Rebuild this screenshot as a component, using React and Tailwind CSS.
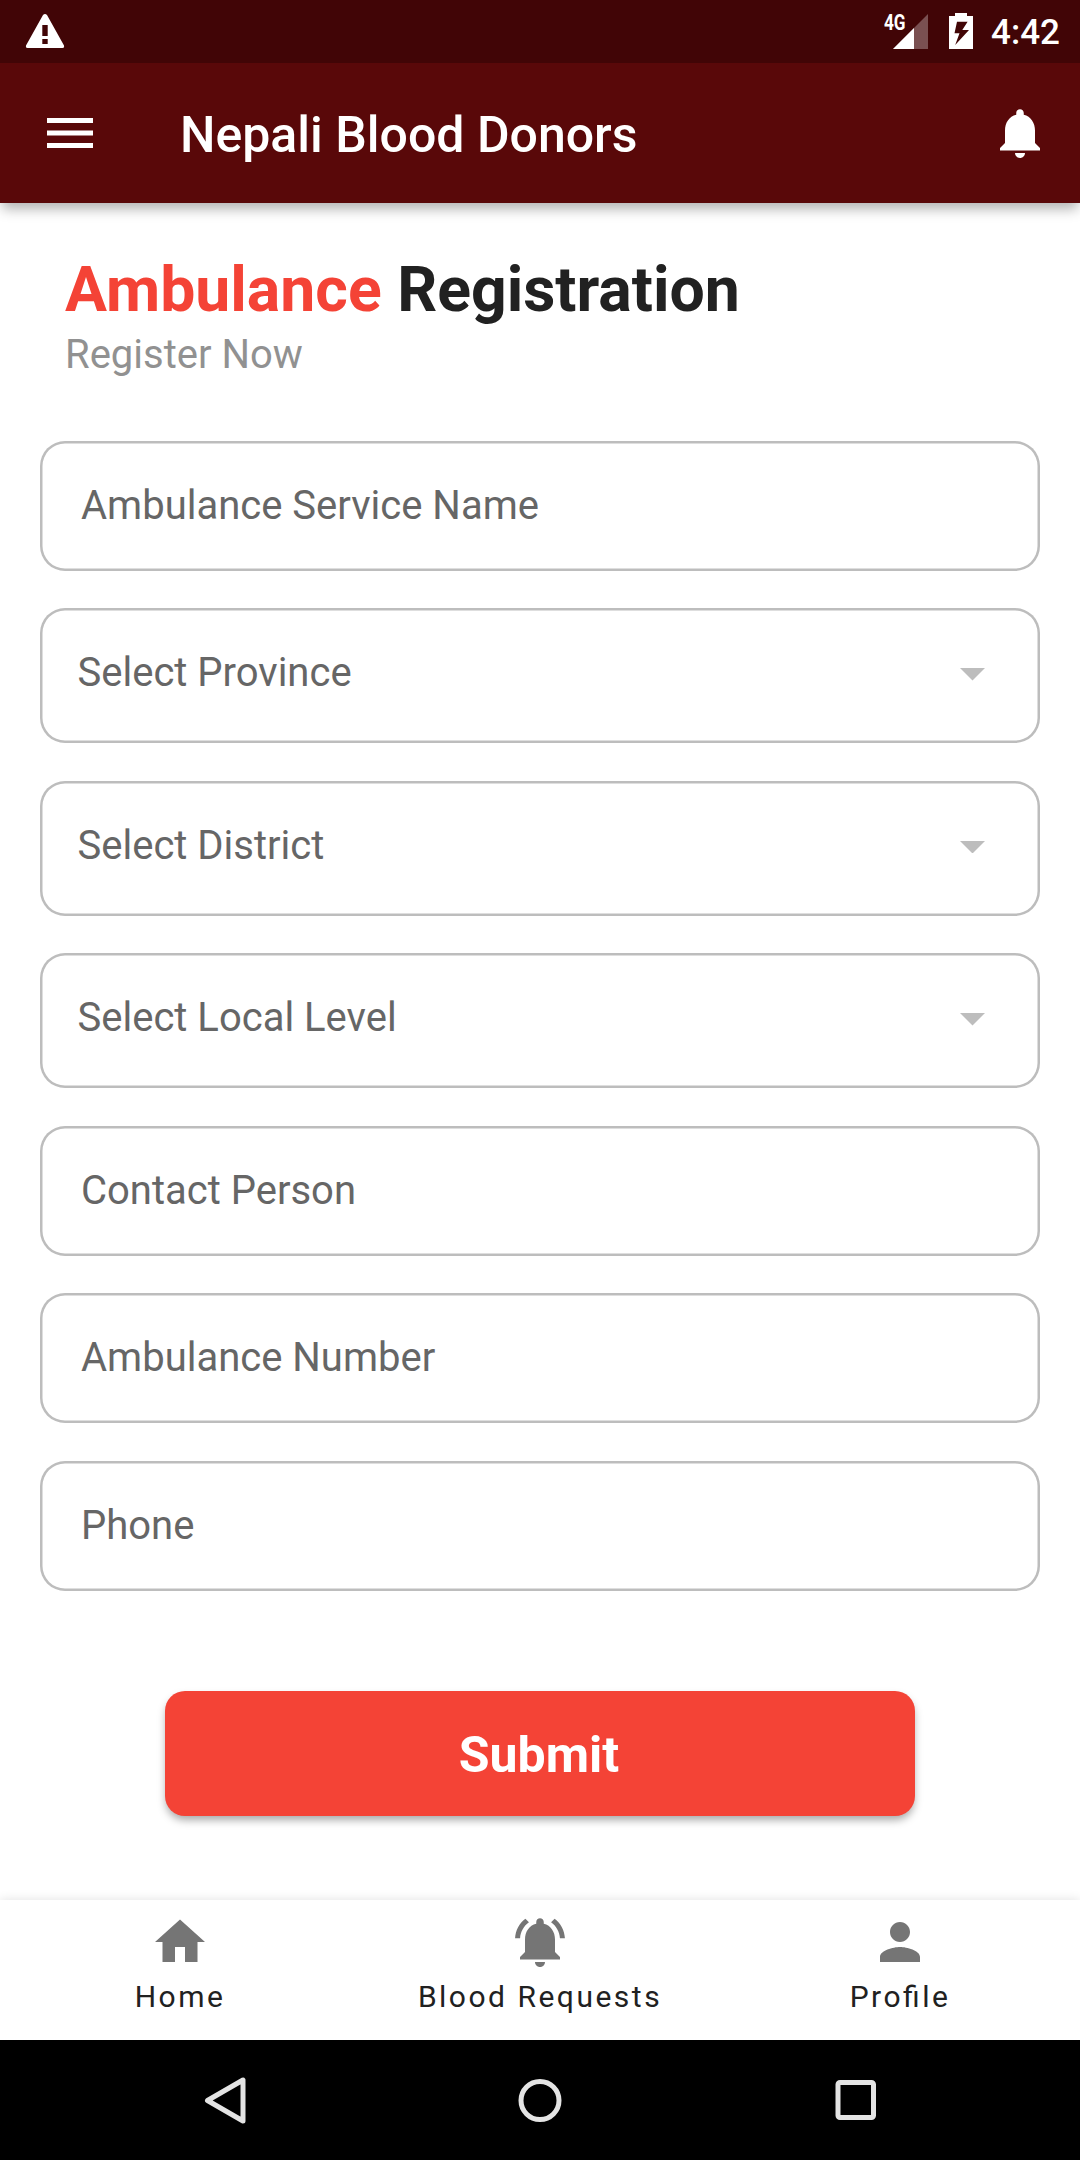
function StatusBar() {
  return (
    <div className="flex h-[63px] items-center bg-[#410506] text-white">
      <svg className="ml-[25px] h-[63px] w-10" viewBox="0 0 40 63" fill="currentColor">
        <path
          fillRule="evenodd"
          d="M18 15Q20 13 22 15L39 45.500Q39.500 48 37.500 48H2.500Q.500 48 1 45.500ZM17.300 25V36H22.700V25ZM17.300 39V44H22.700V39Z"
        />
      </svg>
      <div className="ml-auto flex h-full">
        <span className="mt-[9.500px] w-[22px] origin-left scale-x-[0.800] text-[21.500px] leading-[25px] font-bold">4G</span>
        <svg className="-ml-[14px] h-[63px] w-[37px]" viewBox="0 0 37 63">
          <path d="M1 49L36 14V49Z" fill="#fff" fillOpacity=".3" />
          <path d="M1 49L22 28V49Z" fill="#fff" />
        </svg>
        <svg className="ml-5 h-[63px] w-[24px]" viewBox="0 0 24 63" fill="currentColor">
          <path
            fillRule="evenodd"
            d="M6 13H18V16H24V49H0V16H6ZM8 21.700L5.500 33.300H10.500L6.200 45L20 30H13.300L18.600 21.700Z"
          />
        </svg>
        <span className="mr-5 ml-[18px] text-[35px] leading-[66px] font-medium">4:42</span>
      </div>
    </div>
  );
}

function AppBar() {
  return (
    <header className="flex h-[140px] items-center bg-[#590809] text-white">
      <svg className="ml-10 size-[60px]" viewBox="0 0 60 60" fill="currentColor">
        <path d="M7 15H53V20H7ZM7 27.500H53V32.500H7ZM7 40H53V45H7Z" />
      </svg>
      <h1 className="mt-1 ml-20 text-[50px] leading-[60px] font-medium">Nepali Blood Donors</h1>
      <svg className="mr-[30px] ml-auto size-[60px]" viewBox="0 0 24 24" fill="currentColor">
        <path d="M12 22c1.100 0 2-.900 2-2h-4c0 1.100.890 2 2 2zm6-6v-5c0-3.070-1.640-5.640-4.500-6.320V4c0-.830-.670-1.500-1.500-1.500s-1.500.670-1.500 1.500v.680C7.630 5.360 6 7.920 6 11v5l-2 2v1h16v-1l-2-2z" />
      </svg>
    </header>
  );
}

function TextField({ label }) {
  return (
    <div className="flex h-[130px] items-center rounded-[25px] pl-[41px] text-[40px] text-[#666] shadow-[inset_0_0_0_2.5px_#bdbdbd]">
      {label}
    </div>
  );
}

function SelectField({ label }) {
  return (
    <div className="flex h-[135px] items-center rounded-[25px] pr-[55px] pb-[5px] pl-[37.5px] text-[40px] text-[#666] shadow-[inset_0_0_0_2.5px_#bdbdbd]">
      <span className="grow">{label}</span>
      <svg className="mt-[2.5px] h-[12.500px] w-[25px]" viewBox="0 0 10 5" fill="#bdbdbd">
        <path d="M0 0L5 5L10 0Z" />
      </svg>
    </div>
  );
}

const tabs = [
  { label: "Home", path: "M10 20v-6h4v6h5v-8h3L12 3 2 12h3v8z" },
  {
    label: "Blood Requests",
    path: "M7.580 4.080L6.150 2.650C3.750 4.480 2.170 7.300 2.030 10.500h2c.150-2.650 1.510-4.970 3.550-6.420zm12.390 6.420h2c-.150-3.200-1.730-6.020-4.120-7.850l-1.420 1.430c2.020 1.450 3.390 3.770 3.540 6.420zM18 11c0-3.070-1.640-5.640-4.500-6.320V4c0-.830-.670-1.500-1.500-1.500s-1.500.670-1.500 1.500v.680C7.630 5.360 6 7.920 6 11v5l-2 2v1h16v-1l-2-2v-5zm-6 11c.140 0 .270-.010.400-.040.650-.140 1.180-.580 1.440-1.180.100-.240.150-.500.150-.780h-4c.010 1.100.900 2 2.010 2z",
  },
  {
    label: "Profile",
    path: "M12 12c2.210 0 4-1.790 4-4s-1.790-4-4-4-4 1.790-4 4 1.790 4 4 4zm0 2c-2.670 0-8 1.340-8 4v2h16v-2c0-2.660-5.330-4-8-4z",
  },
];

export default function App() {
  return (
    <div className="flex h-[2160px] w-[1080px] flex-col overflow-hidden bg-white font-['Roboto',sans-serif]">
      <div className="z-10 shadow-[0_8px_12px_-2px_rgba(0,0,0,0.3)]">
        <StatusBar />
        <AppBar />
      </div>

      <main className="flex grow flex-col px-10">
        <h2 className="mt-[50px] ml-[25px] text-[62.5px] leading-[73px] font-bold text-[#212121]">
          <span className="text-[#f44336]">Ambulance</span> Registration
        </h2>
        <p className="mt-[5px] ml-[25px] text-[40px] leading-[47px] text-[#919191]">Register Now</p>

        <form className="mt-[62.5px] flex flex-col gap-[37.5px]">
          <TextField label="Ambulance Service Name" />
          <SelectField label="Select Province" />
          <SelectField label="Select District" />
          <SelectField label="Select Local Level" />
          <TextField label="Contact Person" />
          <TextField label="Ambulance Number" />
          <TextField label="Phone" />
        </form>

        <button
          type="button"
          className="mt-[100px] h-[125px] w-[750px] self-center rounded-[20px] bg-[#f44336] pt-[5px] pr-[2px] text-[50px] font-bold text-white shadow-[0_5px_8px_-1px_rgba(0,0,0,0.35)]"
        >
          Submit
        </button>
      </main>

      <nav className="grid h-[140px] grid-cols-3 bg-white shadow-[0_0_10px_rgba(0,0,0,0.12)]">
        {tabs.map((tab) => (
          <div key={tab.label} className="flex flex-col items-center pt-3">
            <svg className="size-[60px]" viewBox="0 0 24 24" fill="#757575">
              <path d={tab.path} />
            </svg>
            <span className="mt-[6.5px] text-[30px] leading-[35px] tracking-[2.5px] text-[#212121] [font-feature-settings:'liga'_1]">
              {tab.label}
            </span>
          </div>
        ))}
      </nav>

      <div className="flex h-[120px] items-center justify-between bg-black px-[195px]">
        <svg className="size-[60px]" viewBox="0 0 60 60" fill="none" stroke="#e4e4e4" strokeWidth="5" strokeLinejoin="round">
          <path d="M12.500 30.500L48 10V51Z" />
        </svg>
        <svg className="size-[60px]" viewBox="0 0 60 60" fill="none" stroke="#e4e4e4" strokeWidth="5">
          <circle cx="30" cy="30.500" r="19" />
        </svg>
        <svg className="size-[60px]" viewBox="0 0 60 60" fill="none" stroke="#e4e4e4" strokeWidth="5">
          <rect x="13" y="12.500" width="35.500" height="35" rx="2" />
        </svg>
      </div>
    </div>
  );
}
